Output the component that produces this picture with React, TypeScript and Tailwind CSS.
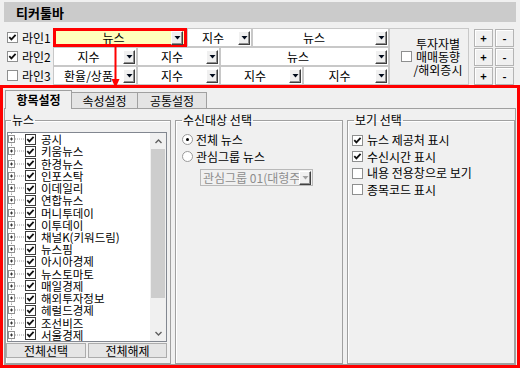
import React from "react";

const NEWS = [
  "공시", "키움뉴스", "한경뉴스", "인포스탁", "이데일리", "연합뉴스", "머니투데이", "이투데이",
  "채널K(키워드림)", "뉴스핌", "아시아경제", "뉴스토마토", "매일경제", "해외투자정보", "헤럴드경제",
  "조선비즈", "서울경제",
];

function Box({ on, dark }: { on?: boolean; dark?: boolean }) {
  return (
    <span className={`inline-flex shrink-0 items-center justify-center w-[11px] h-[11px] border bg-white ${dark ? "border-[#3c3c3c]" : "border-[#8e8f8f]"}`}>
      {on && (
        <svg width="9" height="9" viewBox="0 0 9 9">
          <polyline points="1.3,4.2 3.4,6.4 7.6,1.9" fill="none" stroke="#111" strokeWidth="1.8" />
        </svg>
      )}
    </span>
  );
}

function Arrow({ off }: { off?: boolean }) {
  return (
    <span className="flex shrink-0 items-center justify-center w-[12px] h-[14px] bg-[#f0f0f0] border border-t-white border-l-white border-r-[#404040] border-b-[#404040] shadow-[inset_-1px_-1px_0_#909090]">
      <svg width="7" height="4" viewBox="0 0 7 4">
        <polygon points="0.5,0 6.5,0 3.5,3.5" fill={off ? "#a0a0a0" : "#000a1a"} />
      </svg>
    </span>
  );
}

function Combo({ text, w, hl }: { text: string; w: string; hl?: boolean }) {
  return (
    <div className={`${w} h-full flex items-center pr-[1px] ${hl ? "border-[3px] border-[#ff0000] bg-[#ffffbb]" : "border border-[#c8c8c8] bg-white"}`}>
      <span className="flex-1 min-w-0 whitespace-nowrap text-center text-[12px] leading-[12px]">{text}</span>
      <Arrow />
    </div>
  );
}

function Chevron({ up }: { up?: boolean }) {
  return (
    <svg width="7" height="5" viewBox="0 0 7 5">
      <polyline points={up ? "0.5,4 3.5,1 6.5,4" : "0.5,1 3.5,4 6.5,1"} fill="none" stroke="#606060" strokeWidth="1.4" />
    </svg>
  );
}

function TreeRow({ label }: { label: string }) {
  return (
    <div className="h-[12.35px] flex items-center">
      <svg width="17" height="12" viewBox="0 0 17 12" className="shrink-0">
        <line x1="3.5" y1="0" x2="3.5" y2="2.5" stroke="#a0a0a0" strokeDasharray="1 1" />
        <line x1="3.5" y1="9.5" x2="3.5" y2="12" stroke="#a0a0a0" strokeDasharray="1 1" />
        <rect x="0.5" y="2.5" width="6" height="7" fill="#fff" stroke="#919191" />
        <line x1="2" y1="6" x2="5" y2="6" stroke="#333" />
        <line x1="3.5" y1="4.5" x2="3.5" y2="7.5" stroke="#333" />
        <line x1="7" y1="6" x2="17" y2="6" stroke="#a0a0a0" strokeDasharray="1 1" />
      </svg>
      <Box on dark />
      <span className="ml-[5px] text-[11.5px] leading-[12px] whitespace-nowrap">{label}</span>
    </div>
  );
}

function Radio({ on }: { on?: boolean }) {
  return (
    <span className="flex shrink-0 items-center justify-center w-[11px] h-[11px] rounded-full border border-[#9a9a9a] bg-white">
      {on && <span className="w-[3px] h-[3px] rounded-full bg-black" />}
    </span>
  );
}

function PlusMinus({ t }: { t: string }) {
  return (
    <div className="w-[19px] h-[18px] flex items-center justify-center bg-[#f0f0f0] border border-[#b4b4b4] shadow-[inset_1px_1px_0_#fff] text-[11px] font-bold leading-none">
      {t}
    </div>
  );
}

export default function App() {
  return (
    <div className="relative w-[520px] h-[368px] overflow-hidden bg-[#f0f0f0] text-black font-['Noto_Sans_CJK_KR','Liberation_Sans',sans-serif]">
      <div className="mx-[4px] mt-[2px] h-[20px] bg-[#cbcbcb] flex items-center pl-[12px] text-[13px] font-bold leading-none">
        티커툴바
      </div>

      <div className="flex mt-[6px] h-[57px]">
        <div className="w-[53px] flex flex-col">
          {[["라인1", true], ["라인2", true], ["라인3", false]].map(([l, on]) => (
            <div key={l as string} className="h-[19px] flex items-center pl-[7px] gap-[4px]">
              <Box on={on as boolean} />
              <span className="text-[12px] leading-none">{l as string}</span>
            </div>
          ))}
        </div>

        <div className="w-[336px] flex flex-col">
          <div className="flex h-[19px]">
            <Combo w="w-[134px]" text="뉴스" hl />
            <Combo w="w-[65px]" text="지수" />
            <Combo w="w-[137px]" text="뉴스" />
          </div>
          <div className="flex h-[19px]">
            <Combo w="w-[84px]" text="지수" />
            <Combo w="w-[83px]" text="지수" />
            <Combo w="w-[169px]" text="뉴스" />
          </div>
          <div className="flex h-[19px]">
            <Combo w="w-[84px]" text="환율/상품" />
            <Combo w="w-[83px]" text="지수" />
            <Combo w="w-[83px]" text="지수" />
            <Combo w="w-[86px]" text="지수" />
          </div>
        </div>

        <div className="w-[80px] border border-[#c8c8c8] flex items-center pl-[11px]">
          <Box />
          <div className="flex-1 flex flex-col items-center text-[12px] leading-[13px] pr-[4px]">
            <span>투자자별</span>
            <span>매매동향</span>
            <span>/해외증시</span>
          </div>
        </div>

        <div className="ml-[5px] grid grid-cols-[19px_19px] gap-x-[2px] gap-y-[1px] pt-[1px]">
          <PlusMinus t="+" /><PlusMinus t="-" />
          <PlusMinus t="+" /><PlusMinus t="-" />
          <PlusMinus t="+" /><PlusMinus t="-" />
        </div>
      </div>

      <div className="h-[283px] border-[3px] border-[#ff0000]">
        <div className="flex items-end h-[20px] pl-[2px]">
          <div className="relative z-10 -mb-[1px] w-[67px] h-[19px] border border-b-0 border-[#a0a0a0] bg-[#f0f0f0] flex items-center justify-center text-[12px] font-bold leading-none">
            항목설정
          </div>
          <div className="w-[66px] h-[16px] border border-l-0 border-b-0 border-[#a0a0a0] bg-[#e4e4e4] flex items-center justify-center text-[12px] leading-none">
            속성설정
          </div>
          <div className="w-[69px] h-[16px] border border-l-0 border-b-0 border-[#a0a0a0] bg-[#e4e4e4] flex items-center justify-center text-[12px] leading-none">
            공통설정
          </div>
        </div>

        <div className="ml-[1px] w-[512px] h-[257px] border border-[#a0a0a0] flex gap-[4px] pt-[5px]">
          <fieldset className="w-[166px] h-[250px] border border-[#a0a0a0] shadow-[inset_1px_1px_0_#fff]">
            <legend className="ml-[5px] px-[1px] text-[12px] leading-[12px]">뉴스</legend>
            <div className="mt-[6px] ml-[1px] w-[160px] h-[210px] border border-[#828790] bg-white flex">
              <div className="flex-1 min-w-0 overflow-hidden flex flex-col">
                {NEWS.map((n) => <TreeRow key={n} label={n} />)}
              </div>
              <div className="w-[16px] flex flex-col bg-[#f0f0f0]">
                <div className="h-[16px] flex items-center justify-center"><Chevron up /></div>
                <div className="h-[149px] mx-[1px] bg-[#cdcdcd]" />
                <div className="flex-1" />
                <div className="h-[16px] flex items-center justify-center"><Chevron /></div>
              </div>
            </div>
            <div className="flex gap-[2px] mt-[1px] h-[15px]">
              <div className="w-[80px] border border-[#acacac] bg-[#e5e5e5] flex items-center justify-center text-[12px] leading-none">전체선택</div>
              <div className="w-[79px] border border-[#acacac] bg-[#e5e5e5] flex items-center justify-center text-[12px] leading-none">전체해제</div>
            </div>
          </fieldset>

          <fieldset className="w-[168px] h-[250px] border border-[#a0a0a0] shadow-[inset_1px_1px_0_#fff]">
            <legend className="ml-[6px] px-[1px] text-[12px] leading-[12px]">수신대상 선택</legend>
            <div className="mt-[5px] pl-[6px]">
              <div className="h-[17px] flex items-center gap-[3px]">
                <Radio on />
                <span className="text-[12px] leading-none">전체 뉴스</span>
              </div>
              <div className="h-[17px] flex items-center gap-[3px]">
                <Radio />
                <span className="text-[12px] leading-none">관심그룹 뉴스</span>
              </div>
            </div>
            <div className="mt-[4px] ml-[24px] w-[113px] h-[17px] border border-[#b9b9b9] bg-[#f0f0f0] flex items-center pr-[1px]">
              <span className="flex-1 min-w-0 overflow-x-clip whitespace-nowrap pl-[2px] text-[12px] leading-[12px] text-[#8d8d8d]">관심그룹 01(대형주)</span>
              <Arrow off />
            </div>
          </fieldset>

          <fieldset className="w-[168px] h-[250px] border border-[#a0a0a0] shadow-[inset_1px_1px_0_#fff]">
            <legend className="ml-[6px] px-[1px] text-[12px] leading-[12px]">보기 선택</legend>
            <div className="mt-[6px] pl-[4px]">
              {[["뉴스 제공처 표시", true], ["수신시간 표시", true], ["내용 전용창으로 보기", false], ["종목코드 표시", false]].map(([l, on]) => (
                <div key={l as string} className="h-[16.5px] flex items-center gap-[4px]">
                  <Box on={on as boolean} />
                  <span className="text-[12px] leading-none">{l as string}</span>
                </div>
              ))}
            </div>
          </fieldset>
        </div>
      </div>

      <svg className="absolute left-[111px] top-[46px]" width="9" height="42" viewBox="0 0 9 42">
        <line x1="4.5" y1="0" x2="4.5" y2="34" stroke="#ff0000" strokeWidth="2" />
        <polygon points="0.5,33 8.5,33 4.5,42" fill="#ff0000" />
      </svg>
    </div>
  );
}
